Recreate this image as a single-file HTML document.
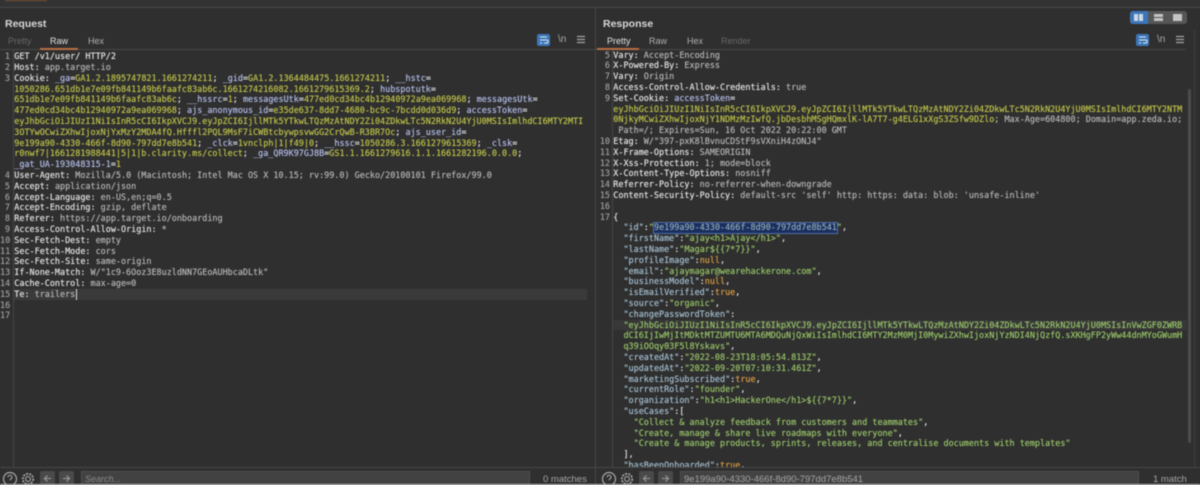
<!DOCTYPE html>
<html>
<head>
<meta charset="utf-8">
<style>
html,body{margin:0;padding:0;background:#2f2f2f;}
#app{position:relative;width:1200px;height:485px;overflow:hidden;background:#2f2f2f;font-family:"Liberation Sans",sans-serif;filter:blur(.45px);}
.a{position:absolute;}
pre{position:absolute;margin:0;font-family:"DejaVu Sans Mono","Liberation Mono",monospace;font-size:8.45px;line-height:10.8px;white-space:pre;color:#e2e2e2;text-shadow:0 0 .4px currentColor;}
.n{color:#9a9a9a;text-align:right;}
i{font-style:normal;color:#b2b2b2;}
u{text-decoration:none;color:#b0b9e4;}
b{font-weight:normal;color:#bcc048;}
em{font-style:normal;color:#a3bccd;}
s{text-decoration:none;color:#96c268;}
q{quotes:none;color:#d89a42;}
q:before,q:after{content:none;}
.t{font-size:9px;color:#d0d0d0;}
.h{font-size:10.5px;font-weight:bold;color:#d8d8d8;}
</style>
</head>
<body>
<div id="app">
<div class="a" style="left:0;top:0;width:1200px;height:7px;background:#333"></div>
<div class="a" style="left:5px;top:0;width:42px;height:1px;background:#7a5236"></div>
<div class="a" style="left:0;top:7px;width:1200px;height:1px;background:#474747"></div>

<div class="a" style="left:595px;top:8px;width:1px;height:477px;background:#454545"></div>
<div class="a" style="left:1194px;top:30px;width:1px;height:437px;background:#3f3f3f"></div>

<div class="a h" style="left:5px;top:18px">Request</div>
<div class="a h" style="left:603px;top:18px">Response</div>

<div class="a t" style="left:8px;top:36px;color:#666">Pretty</div>
<div class="a t" style="left:50px;top:36px;color:#e0e0e0">Raw</div>
<div class="a t" style="left:88px;top:36px;color:#b0b0b0">Hex</div>
<div class="a t" style="left:607px;top:36px;color:#e0e0e0">Pretty</div>
<div class="a t" style="left:649px;top:36px;color:#b0b0b0">Raw</div>
<div class="a t" style="left:687px;top:36px;color:#b0b0b0">Hex</div>
<div class="a t" style="left:721px;top:36px;color:#666">Render</div>

<div class="a" style="left:0;top:49px;width:595px;height:1px;background:#484848"></div>
<div class="a" style="left:596px;top:49px;width:590px;height:1px;background:#484848"></div>
<div class="a" style="left:40px;top:48px;width:38px;height:2px;background:#b86f45"></div>
<div class="a" style="left:597px;top:48px;width:42px;height:2px;background:#b86f45"></div>

<!-- layout buttons -->
<div class="a" style="left:1130px;top:11px;width:57px;height:13px;background:#565656;border-radius:3px"></div>
<div class="a" style="left:1130px;top:11px;width:18px;height:13px;background:#3c76b8;border-radius:3px 0 0 3px"></div>
<div class="a" style="left:1134px;top:14px;width:4px;height:7px;background:#cfd9e6"></div>
<div class="a" style="left:1139px;top:14px;width:4px;height:7px;background:#cfd9e6"></div>
<div class="a" style="left:1154px;top:14px;width:9px;height:3px;background:#c4c4c4"></div>
<div class="a" style="left:1154px;top:18px;width:9px;height:3px;background:#c4c4c4"></div>
<div class="a" style="left:1173px;top:14px;width:9px;height:7px;background:#c4c4c4"></div>

<!-- wrap / \n / menu left -->
<div class="a" style="left:537px;top:34px;width:13px;height:12px;background:#3c76b8;border-radius:2px"></div>
<svg class="a" style="left:537px;top:34px" width="13" height="12" viewBox="0 0 13 12"><path d="M3 3h7M3 6h7c1.500 0 1.500 3 0 3H7M3 9h2" stroke="#dfe8f2" stroke-width="1" fill="none"/></svg>
<div class="a" style="left:558px;top:34px;font:10px 'Liberation Sans',sans-serif;color:#aaa">\n</div>
<svg class="a" style="left:577px;top:35px" width="8" height="9"><path d="M0 1.500h8M0 4.500h8M0 7.500h8" stroke="#a5a5a5" stroke-width="1.300"/></svg>
<!-- wrap / \n / menu right -->
<div class="a" style="left:1136px;top:34px;width:13px;height:12px;background:#3c76b8;border-radius:2px"></div>
<svg class="a" style="left:1136px;top:34px" width="13" height="12" viewBox="0 0 13 12"><path d="M3 3h7M3 6h7c1.500 0 1.500 3 0 3H7M3 9h2" stroke="#dfe8f2" stroke-width="1" fill="none"/></svg>
<div class="a" style="left:1157px;top:34px;font:10px 'Liberation Sans',sans-serif;color:#aaa">\n</div>
<svg class="a" style="left:1176px;top:35px" width="8" height="9"><path d="M0 1.500h8M0 4.500h8M0 7.500h8" stroke="#a5a5a5" stroke-width="1.300"/></svg>

<!-- gutters -->
<div class="a" style="left:13px;top:50px;width:1px;height:417px;background:#454545"></div>
<div class="a" style="left:612px;top:50px;width:1px;height:417px;background:#454545"></div>

<!-- active line -->
<div class="a" style="left:14px;top:289px;width:573px;height:11px;background:#3a3a3a"></div>
<div class="a" style="left:76px;top:289px;width:1px;height:11px;background:#ddd"></div>
<!-- token highlight -->
<div class="a" style="left:613px;top:320px;width:574px;height:10px;background:#383838"></div>
<!-- id highlight -->
<div class="a" style="left:654px;top:223px;width:183px;height:10px;background:#1a2f60;outline:1px solid #4f6fa5"></div>

<pre class="n" style="left:0;top:51.300px;width:10px">1
2
3








4
5
6
7
8
9
10
11
12
13
14
15
16
17</pre>

<pre style="left:14.300px;top:51.300px">GET /v1/user/ HTTP/2
Host: <i>app.target.io</i>
Cookie: <u>_ga</u>=<b>GA1.2.1895747821.1661274211</b>; <u>_gid</u>=<b>GA1.2.1364484475.1661274211</b>; <u>__hstc</u>=
<b>1050286.651db1e7e09fb841149b6faafc83ab6c.1661274216082.1661279615369.2</b>; <u>hubspotutk</u>=
<b>651db1e7e09fb841149b6faafc83ab6c</b>; <u>__hssrc</u>=<b>1</b>; <u>messagesUtk</u>=<b>477ed0cd34bc4b12940972a9ea069968</b>; <u>messagesUtk</u>=
<b>477ed0cd34bc4b12940972a9ea069968</b>; <u>ajs_anonymous_id</u>=<b>e35de637-8dd7-4680-bc9c-7bcdd0d036d9</b>; <u>accessToken</u>=
<b>eyJhbGciOiJIUzI1NiIsInR5cCI6IkpXVCJ9.eyJpZCI6IjllMTk5YTkwLTQzMzAtNDY2Zi04ZDkwLTc5N2RkN2U4YjU0MSIsImlhdCI6MTY2MTI</b>
<b>3OTYwOCwiZXhwIjoxNjYxMzY2MDA4fQ.Hfffl2PQL9MsF7iCWBtcbywpsvwGG2CrQwB-R3BR7Oc</b>; <u>ajs_user_id</u>=
<b>9e199a90-4330-466f-8d90-797dd7e8b541</b>; <u>_clck</u>=<b>1vnclph|1|f49|0</b>; <u>__hssc</u>=<b>1050286.3.1661279615369</b>; <u>_clsk</u>=
<b>r0nwf7|1661281988441|5|1|b.clarity.ms/collect</b>; <u>_ga_QR9K97GJ8B</u>=<b>GS1.1.1661279616.1.1.1661282196.0.0.0</b>;
<u>_gat_UA-193048315-1</u>=<b>1</b>
User-Agent: <i>Mozilla/5.0 (Macintosh; Intel Mac OS X 10.15; rv:99.0) Gecko/20100101 Firefox/99.0</i>
Accept: <i>application/json</i>
Accept-Language: <i>en-US,en;q=0.5</i>
Accept-Encoding: <i>gzip, deflate</i>
Referer: <i>https://app.target.io/onboarding</i>
Access-Control-Allow-Origin: <i>*</i>
Sec-Fetch-Dest: <i>empty</i>
Sec-Fetch-Mode: <i>cors</i>
Sec-Fetch-Site: <i>same-origin</i>
If-None-Match: <i>W/"1c9-6Ooz3E8uzldNN7GEoAUHbcaDLtk"</i>
Cache-Control: <i>max-age=0</i>
Te: <i>trailers</i></pre>

<div class="a" style="left:596px;top:50px;width:594px;height:417px;overflow:hidden">
<pre class="n" style="left:0;top:-.400px;width:14px">5
6
7
8
9



10
11
12
13
14
15
16
17</pre>
<pre style="left:17.300px;top:-.400px">Vary: <i>Accept-Encoding</i>
X-Powered-By: <i>Express</i>
Vary: <i>Origin</i>
Access-Control-Allow-Credentials: <i>true</i>
Set-Cookie: <u>accessToken</u>=
<b>eyJhbGciOiJIUzI1NiIsInR5cCI6IkpXVCJ9.eyJpZCI6IjllMTk5YTkwLTQzMzAtNDY2Zi04ZDkwLTc5N2RkN2U4YjU0MSIsImlhdCI6MTY2NTM</b>
<b>0NjkyMCwiZXhwIjoxNjY1NDMzMzIwfQ.jbDesbhMSgHQmxlK-lA7T7-g4ELG1xXgS3ZSfw9DZlo</b><i>; Max-Age=604800; Domain=app.zeda.io;</i>
<i> Path=/; Expires=Sun, 16 Oct 2022 20:22:00 GMT</i>
Etag: <i>W/"397-pxK8lBvnuCDStF9sVXniH4zONJ4"</i>
X-Frame-Options: <i>SAMEORIGIN</i>
X-Xss-Protection: <i>1; mode=block</i>
X-Content-Type-Options: <i>nosniff</i>
Referrer-Policy: <i>no-referrer-when-downgrade</i>
Content-Security-Policy: <i>default-src 'self' http: https: data: blob: 'unsafe-inline'</i>

{
  <em>"id"</em>:<s>"</s><span style="color:#8fa6b0">9e199a90-4330-466f-8d90-797dd7e8b541</span><s>"</s>,
  <em>"firstName"</em>:<s>"ajay&lt;h1&gt;Ajay&lt;/h1&gt;"</s>,
  <em>"lastName"</em>:<s>"Magar${{7*7}}"</s>,
  <em>"profileImage"</em>:<q>null</q>,
  <em>"email"</em>:<s>"ajaymagar@wearehackerone.com"</s>,
  <em>"businessModel"</em>:<q>null</q>,
  <em>"isEmailVerified"</em>:<q>true</q>,
  <em>"source"</em>:<s>"organic"</s>,
  <em>"changePasswordToken"</em>:
  <s>"eyJhbGciOiJIUzI1NiIsInR5cCI6IkpXVCJ9.eyJpZCI6IjllMTk5YTkwLTQzMzAtNDY2Zi04ZDkwLTc5N2RkN2U4YjU0MSIsInVwZGF0ZWRB</s>
  <s>dCI6IjIwMjItMDktMTZUMTU6MTA6MDQuNjQxWiIsImlhdCI6MTY2MzM0MjI0MywiZXhwIjoxNjYzNDI4NjQzfQ.sXKHgFP2yWw44dnMYoGWumH</s>
  <s>q39iOOqy03F5l8Yskavs"</s>,
  <em>"createdAt"</em>:<s>"2022-08-23T18:05:54.813Z"</s>,
  <em>"updatedAt"</em>:<s>"2022-09-20T07:10:31.461Z"</s>,
  <em>"marketingSubscribed"</em>:<q>true</q>,
  <em>"currentRole"</em>:<s>"founder"</s>,
  <em>"organization"</em>:<s>"h1&lt;h1&gt;HackerOne&lt;/h1&gt;${{7*7}}"</s>,
  <em>"useCases"</em>:[
    <s>"Collect &amp; analyze feedback from customers and teammates"</s>,
    <s>"Create, manage &amp; share live roadmaps with everyone"</s>,
    <s>"Create &amp; manage products, sprints, releases, and centralise documents with templates"</s>
  ],
  <em>"hasBeenOnboarded"</em>:<q>true</q>,</pre>
</div>

<!-- scrollbar -->
<div class="a" style="left:1188px;top:89px;width:3px;height:354px;background:#4c4c4c;border-radius:2px"></div>

<!-- bottom bars -->
<div class="a" style="left:0;top:467px;width:1200px;height:1px;background:#474747"></div>

<svg class="a" style="left:2px;top:471px" width="46" height="14" viewBox="0 0 46 14">
<circle cx="8" cy="8" r="6.500" stroke="#a8a8a8" stroke-width="1.200" fill="none"/>
<path d="M6 6.200c0-2.600 4-2.600 4 0 0 1.600-2 1.600-2 3.200" stroke="#a8a8a8" stroke-width="1.100" fill="none"/>
<circle cx="26" cy="8" r="5.200" stroke="#a8a8a8" stroke-width="1.800" stroke-dasharray="2 1.200" fill="none"/>
<circle cx="26" cy="8" r="2.400" stroke="#a8a8a8" stroke-width="1.100" fill="none"/>
</svg>
<div class="a" style="left:40px;top:471px;width:15px;height:14px;background:#4a4a4a;border-radius:2px"></div>
<div class="a" style="left:59px;top:471px;width:15px;height:14px;background:#4a4a4a;border-radius:2px"></div>
<svg class="a" style="left:40px;top:471px" width="34" height="14"><path d="M11 7.500H4.500M7.500 4.500l-3 3 3 3M23 7.500h6.500M26.500 4.500l3 3-3 3" stroke="#9c9c9c" stroke-width="1.100" fill="none"/></svg>
<div class="a" style="left:81px;top:471px;width:449px;height:14px;background:#424242;border:1px solid #4e4e4e;box-sizing:border-box"></div>
<div class="a" style="left:85px;top:474px;font:italic 9px 'Liberation Sans',sans-serif;color:#8a8a8a">Search...</div>
<div class="a" style="left:543px;top:474px;font:9.500px 'Liberation Sans',sans-serif;color:#a5a5a5">0 matches</div>

<svg class="a" style="left:600px;top:471px" width="46" height="14" viewBox="0 0 46 14">
<circle cx="9" cy="8" r="6.500" stroke="#a8a8a8" stroke-width="1.200" fill="none"/>
<path d="M7 6.200c0-2.600 4-2.600 4 0 0 1.600-2 1.600-2 3.200" stroke="#a8a8a8" stroke-width="1.100" fill="none"/>
<circle cx="27" cy="8" r="5.200" stroke="#a8a8a8" stroke-width="1.800" stroke-dasharray="2 1.200" fill="none"/>
<circle cx="27" cy="8" r="2.400" stroke="#a8a8a8" stroke-width="1.100" fill="none"/>
</svg>
<div class="a" style="left:639px;top:471px;width:15px;height:14px;background:#4a4a4a;border-radius:2px"></div>
<div class="a" style="left:658px;top:471px;width:15px;height:14px;background:#4a4a4a;border-radius:2px"></div>
<svg class="a" style="left:639px;top:471px" width="34" height="14"><path d="M11 7.500H4.500M7.500 4.500l-3 3 3 3M23 7.500h6.500M26.500 4.500l3 3-3 3" stroke="#9c9c9c" stroke-width="1.100" fill="none"/></svg>
<div class="a" style="left:680px;top:471px;width:459px;height:14px;background:#424242;border:1px solid #4e4e4e;box-sizing:border-box"></div>
<div class="a" style="left:684px;top:474px;font:9.500px 'Liberation Sans',sans-serif;color:#a5a5a5">9e199a90-4330-466f-8d90-797dd7e8b541</div>
<div class="a" style="left:1153px;top:474px;font:9.500px 'Liberation Sans',sans-serif;color:#a5a5a5">1 match</div>

<div class="a" style="left:0;top:484px;width:1200px;height:1px;background:#d8d8d8"></div>
</div>
</body>
</html>
